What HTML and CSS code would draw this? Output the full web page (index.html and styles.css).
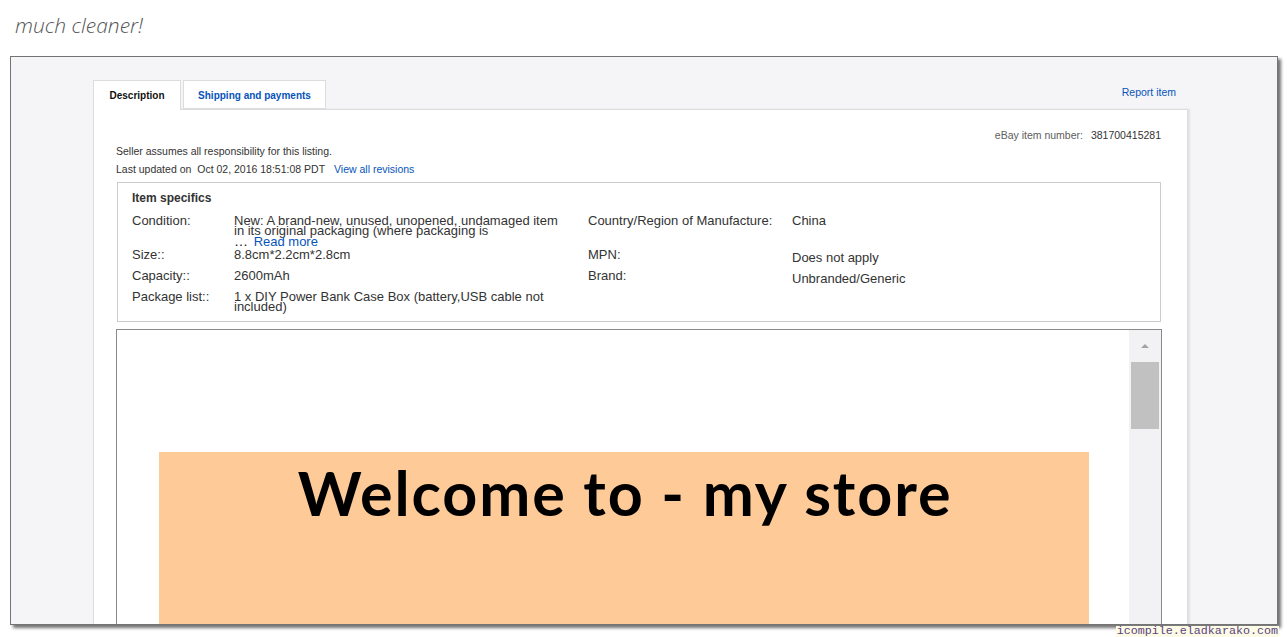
FILE: index.html
```html
<!DOCTYPE html>
<html>
<head>
<meta charset="utf-8">
<link rel="stylesheet" href="styles.css">
</head>
<body>
<div class="title">much cleaner!</div>
<div class="frame">
  <div class="listing">
    <div class="tabbar">
      <div class="tab active">Description</div>
      <div class="tab ship">Shipping and payments</div>
      <a class="report">Report item</a>
    </div>
    <div class="panel">
      <div class="itemnum"><span class="lbl">eBay item number:</span><span class="num">381700415281</span></div>
      <div class="line">Seller assumes all responsibility for this listing.</div>
      <div class="line">Last updated on <span class="date">Oct 02, 2016 18:51:08 PDT</span> <a class="link">View all revisions</a></div>
      <div class="specs">
        <div class="specs-title">Item specifics</div>
        <div class="specs-grid">
          <div class="lab">Condition:</div>
          <div class="val multi">New: A brand-new, unused, unopened, undamaged item in its original packaging (where packaging is<br><span class="dots">…</span> <a class="more">Read more</a></div>
          <div class="lab">Country/Region of Manufacture:</div>
          <div class="val">China</div>

          <div class="lab">Size::</div>
          <div class="val">8.8cm*2.2cm*2.8cm</div>
          <div class="lab">MPN:</div>
          <div class="val low">Does not apply</div>

          <div class="lab">Capacity::</div>
          <div class="val">2600mAh</div>
          <div class="lab">Brand:</div>
          <div class="val low">Unbranded/Generic</div>

          <div class="lab">Package list::</div>
          <div class="val multi">1 x DIY Power Bank Case Box (battery,USB cable not included)</div>
          <div class="lab"></div>
          <div class="val"></div>
        </div>
      </div>
      <div class="iframe">
        <div class="doc">
          <div class="banner">Welcome to - my store</div>
        </div>
        <div class="scrollbar">
          <div class="arrowbox"><div class="arrow"></div></div>
          <div class="thumb"></div>
        </div>
      </div>
    </div>
  </div>
</div>
<div class="wmrow"><span class="wm">icompile.eladkarako.com</span></div>
</body>
</html>
```

FILE: styles.css
```css
* { box-sizing: border-box; }
html, body { margin: 0; padding: 0; background: #ffffff; }
body { width: 1288px; height: 637px; overflow: hidden; font-family: "Liberation Sans", Arial, sans-serif; }

.title {
  height: 56px;
  padding: 10px 0 0 15px;
  font-family: "Open Sans", sans-serif;
  font-style: italic;
  font-weight: 300;
  font-size: 21px;
  line-height: 30px;
  color: #555555;
}

.frame {
  margin-left: 10px;
  width: 1268px;
  height: 569px;
  border: 1px solid #747474;
  background: #f5f4f7;
  box-shadow: 3px 3px 3px rgba(0,0,0,0.55);
  overflow: hidden;
  padding: 23px 0 0 82px;
}

.listing { width: 1095px; }

.tabbar {
  display: flex;
  align-items: flex-end;
  gap: 2px;
  height: 29px;
}
.tab {
  height: 29px;
  border: 1px solid #dcdcdc;
  background: #fff;
  font-size: 10px;
  font-weight: bold;
  line-height: 14px;
  padding-top: 8px;
  text-align: center;
  color: #0654ba;
  width: 143px;
}
.tab.active {
  width: 88px;
  height: 30px;
  margin-bottom: -1px;
  border-bottom: none;
  color: #111;
  position: relative;
  z-index: 1;
}
.report {
  margin-left: auto;
  margin-right: 12px;
  align-self: flex-start;
  margin-top: 5px;
  font-size: 10.5px;
  line-height: 14px;
  color: #0654ba;
}

.panel {
  background: #fff;
  border: 1px solid #dcdcdc;
  height: 560px;
  padding: 18px 25px 0 22px;
  box-shadow: 2px 0 2px rgba(0,0,0,0.08);
}

.itemnum {
  text-align: right;
  font-size: 10.5px;
  line-height: 14px;
  padding-right: 1px;
}
.itemnum .lbl { color: #5d5d5d; margin-right: 8px; }
.itemnum .num { color: #333; }

.line {
  font-size: 10.5px;
  line-height: 18px;
  color: #333;
}
.line .date { margin-left: 3px; margin-right: 6px; }
.link, .more { color: #0654ba; }

.specs {
  margin: 4px 1px 0 1px;
  border: 1px solid #cccccc;
  padding: 7px 14px 8px 14px;
  height: 140px;
}
.specs-title {
  font-size: 12px;
  font-weight: bold;
  line-height: 16px;
  color: #333;
  margin-bottom: 4px;
}
.specs-grid {
  display: grid;
  grid-template-columns: 102px 354px 204px 1fr;
  grid-template-rows: 34px 21px 21px 26px;
  font-size: 13px;
  color: #333;
}
.lab { line-height: 21px; }
.val { line-height: 21px; }
.val.multi { line-height: 10px; padding-top: 5.5px; padding-right: 20px; }
.val.low { padding-top: 3px; }
.dots { color: #111; font-size: 14px; }
.more { margin-left: 2px; }

.iframe {
  margin-top: 7px;
  width: 1046px;
  height: 420px;
  border: 1px solid #8a8a8a;
  display: flex;
}
.doc {
  flex: 1;
  background: #fff;
  padding: 122px 0 0 42px;
}
.banner {
  width: 930px;
  height: 300px;
  background: #fdca98;
  padding-top: 10px;
  padding-left: 2px;
  text-align: center;
  font-family: "Lato", sans-serif;
  font-weight: 700;
  font-size: 61px;
  line-height: 61px;
  letter-spacing: 1.9px;
  color: #000;
}
.scrollbar {
  width: 32px;
  background: #f2f1f4;
  display: flex;
  flex-direction: column;
  align-items: center;
}
.arrowbox {
  height: 32px;
  width: 100%;
  display: flex;
  justify-content: center;
  padding-top: 14px;
}
.arrow {
  width: 0;
  height: 0;
  border-left: 4px solid transparent;
  border-right: 4px solid transparent;
  border-bottom: 4px solid #a3a3a3;
}
.thumb {
  width: 28px;
  height: 67px;
  background: #c1c1c1;
}

.wmrow {
  display: flex;
  justify-content: flex-end;
  padding-right: 9px;
  margin-top: 1px;
}
.wm {
  font-family: "Liberation Mono", monospace;
  font-size: 11.7px;
  line-height: 11px;
  color: #5b3f80;
  background: #fbfbe6;
  padding: 0 1px;
}
```
